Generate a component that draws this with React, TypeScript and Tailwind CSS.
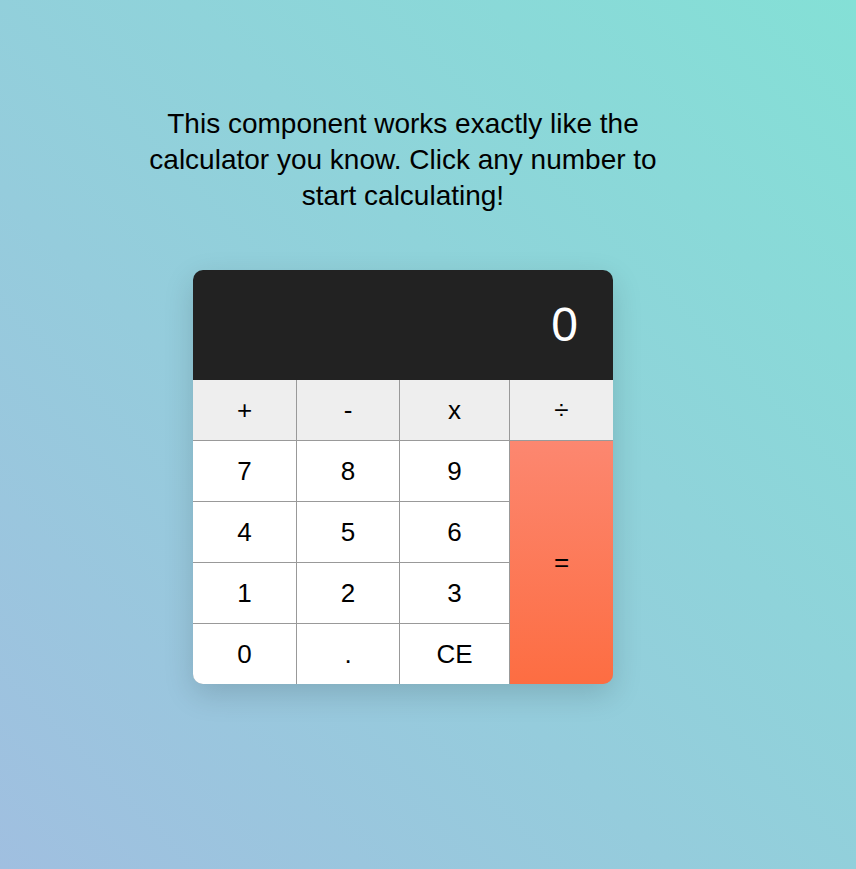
import React, { useState } from 'react';

const ops = ['+', '-', 'x', '÷'];
const digits = ['7', '8', '9', '4', '5', '6', '1', '2', '3', '0', '.', 'CE'];

const Calculator: React.FC = () => {
    const [display, setDisplay] = useState('0');

    const press = (key: string) => {
        if (key === 'CE') return setDisplay('0');
        setDisplay(prev => (prev === '0' && key !== '.' ? key : prev + key));
    };

    return (
        <div className="mt-[56px] w-[420px] overflow-hidden rounded-[10px] shadow-[0_10px_30px_rgba(0,0,0,0.15)]">
            <div className="h-[110px] bg-[#222222] flex items-center justify-end pr-[35px] text-white text-[48px]">
                {display}
            </div>
            <div className="grid grid-cols-[103px_102px_109px_103px] grid-rows-[repeat(5,60px)] gap-px bg-[#999999]">
                {ops.map(op => (
                    <button key={op} className="bg-[#eeeeee] text-[26px] text-black flex items-center justify-center">
                        {op}
                    </button>
                ))}
                {digits.slice(0, 3).map(d => (
                    <button key={d} onClick={() => press(d)} className="bg-white text-[26px] text-black flex items-center justify-center">
                        {d}
                    </button>
                ))}
                <button className="row-span-4 bg-[linear-gradient(to_bottom,#fc8770,#fd6d42)] text-[26px] text-black flex items-center justify-center">
                    =
                </button>
                {digits.slice(3).map(d => (
                    <button key={d} onClick={() => press(d)} className="bg-white text-[26px] text-black flex items-center justify-center">
                        {d}
                    </button>
                ))}
            </div>
        </div>
    );
};

export default function App() {
    return (
        <div className="min-h-screen w-full bg-[linear-gradient(to_top_right,#a0bfe0,#84e0d6)] font-['Liberation_Sans',Arial,sans-serif]">
            <div className="flex flex-col items-center pr-[50px] pt-[106px]">
                <p className="w-[540px] text-center text-[28px] leading-[36px] text-black">
                    This component works exactly like the calculator you know. Click any number to start calculating!
                </p>
                <Calculator />
            </div>
        </div>
    );
}
